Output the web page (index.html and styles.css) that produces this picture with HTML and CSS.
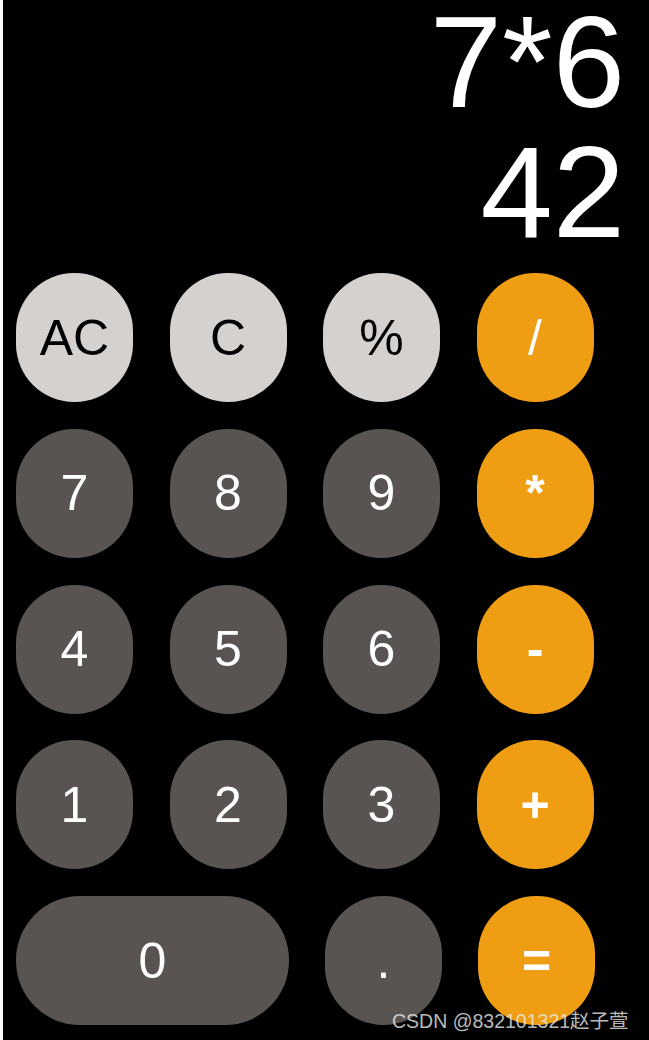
FILE: index.html
```html
<!DOCTYPE html>
<html lang="zh">
<head>
<meta charset="utf-8">
<title>Calculator</title>
<link rel="stylesheet" href="styles.css">
</head>
<body>
<div class="app">
  <div class="display">
    <div class="expr">7*6</div>
    <div class="result">42</div>
  </div>
  <div class="keys">
    <div class="key light">AC</div>
    <div class="key light">C</div>
    <div class="key light">%</div>
    <div class="key op thin">/</div>
    <div class="key dark">7</div>
    <div class="key dark">8</div>
    <div class="key dark">9</div>
    <div class="key op">*</div>
    <div class="key dark">4</div>
    <div class="key dark">5</div>
    <div class="key dark">6</div>
    <div class="key op">-</div>
    <div class="key dark">1</div>
    <div class="key dark">2</div>
    <div class="key dark">3</div>
    <div class="key op">+</div>
  </div>
  <div class="lastrow">
    <div class="key dark wide">0</div>
    <div class="key dark">.</div>
    <div class="key op">=</div>
  </div>
  <div class="watermark">CSDN @832101321赵子萱</div>
</div>
</body>
</html>
```
FILE: styles.css
```css
html, body {
  margin: 0;
  padding: 0;
  background: #ffffff;
}
.app {
  position: relative;
  margin-left: 3px;
  height: 1040px;
  background: #000000;
  font-family: "Liberation Sans", Arial, sans-serif;
  overflow: hidden;
}
.display {
  text-align: right;
  color: #ffffff;
  font-size: 130px;
  padding-right: 24px;
}
.expr {
  line-height: 124px;
}
.result {
  line-height: 137px;
}
.keys {
  display: grid;
  grid-template-columns: repeat(4, 117px);
  grid-auto-rows: 129px;
  column-gap: 36.5px;
  row-gap: 26.75px;
  padding-left: 13px;
  margin-top: 12px;
}
.lastrow {
  display: flex;
  gap: 36px;
  padding-left: 13px;
  margin-top: 26.75px;
}
.key {
  width: 117px;
  height: 129px;
  border-radius: 58px;
  display: flex;
  align-items: center;
  justify-content: center;
  font-size: 50px;
  color: #ffffff;
}
.key.wide {
  width: 273px;
  border-radius: 64px;
}
.light {
  background: #d5d1cf;
  color: #000000;
}
.dark {
  background: #595352;
}
.op {
  background: #ef9e13;
  font-weight: bold;
}
.op.thin {
  font-weight: normal;
}
.watermark {
  position: absolute;
  left: 389px;
  top: 1005px;
  font-family: "Liberation Sans", "Noto Sans CJK SC", sans-serif;
  font-size: 19.5px;
  color: rgba(235, 235, 235, 0.8);
  white-space: nowrap;
}
```
